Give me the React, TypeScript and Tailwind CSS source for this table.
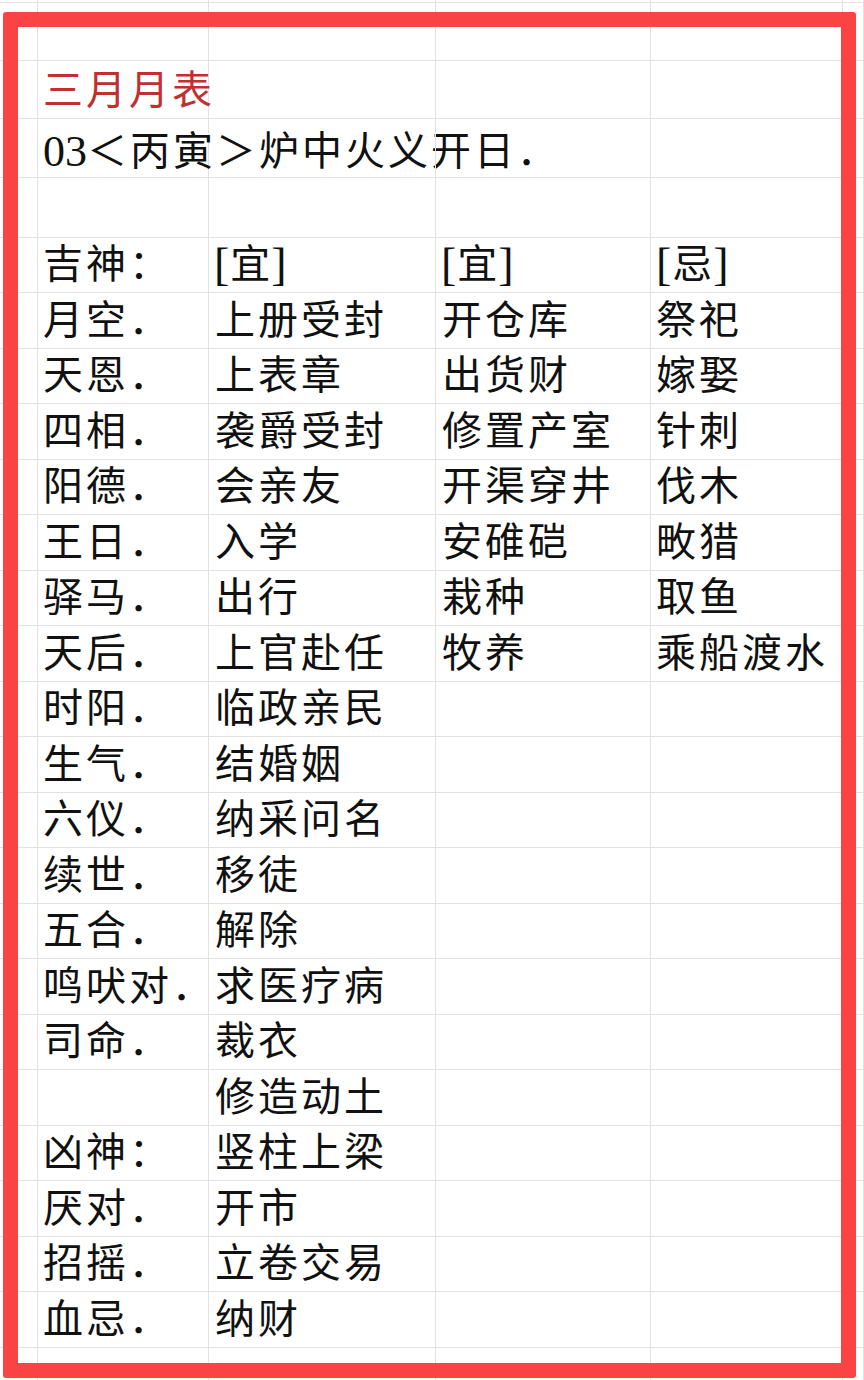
import type { ReactNode } from 'react'

// 月表数据：吉神 / 宜 / 宜 / 忌
const rows: string[][] = [
  ['月空．', '上册受封', '开仓库', '祭祀'],
  ['天恩．', '上表章', '出货财', '嫁娶'],
  ['四相．', '袭爵受封', '修置产室', '针刺'],
  ['阳德．', '会亲友', '开渠穿井', '伐木'],
  ['王日．', '入学', '安碓硙', '畋猎'],
  ['驿马．', '出行', '栽种', '取鱼'],
  ['天后．', '上官赴任', '牧养', '乘船渡水'],
  ['时阳．', '临政亲民', '', ''],
  ['生气．', '结婚姻', '', ''],
  ['六仪．', '纳采问名', '', ''],
  ['续世．', '移徒', '', ''],
  ['五合．', '解除', '', ''],
  ['鸣吠对．', '求医疗病', '', ''],
  ['司命．', '裁衣', '', ''],
  ['', '修造动土', '', ''],
  ['凶神：', '竖柱上梁', '', ''],
  ['厌对．', '开市', '', ''],
  ['招摇．', '立卷交易', '', ''],
  ['血忌．', '纳财', '', ''],
]

const font = "font-['Liberation_Serif','Noto_Sans_CJK_SC',serif]"

function Cell({ children, className = '' }: { children?: ReactNode; className?: string }) {
  return (
    <div
      className={`flex items-center border-r border-[#e2e2e2] whitespace-nowrap overflow-visible pl-[5px] text-[40px] tracking-[3px] text-[#111] leading-none ${font} ${className}`}
    >
      {children}
    </div>
  )
}

// 表头 [宜] / [忌]，方括号用衬线体并稍大
function Bracket({ word }: { word: string }) {
  return (
    <>
      <span className="text-[46px] tracking-normal">[</span>
      <span className="mx-[1px] tracking-normal">{word}</span>
      <span className="text-[46px] tracking-normal">]</span>
    </>
  )
}

/**
 * 表格行 - 六列：空列 / 吉神 / 宜 / 宜 / 忌 / 空列
 */
function Row({ height, cells = [], children }: { height: string; cells?: string[]; children?: ReactNode }) {
  return (
    <div className={`grid grid-cols-[38px_171px_227px_215px_192px_1fr] border-b border-[#e2e2e2] ${height}`}>
      <Cell />
      {children ?? (
        <>
          <Cell>{cells[0]}</Cell>
          <Cell className="pl-[6px]">{cells[1]}</Cell>
          <Cell className="pl-[6px]">{cells[2]}</Cell>
          <Cell className="pl-[5px]">{cells[3]}</Cell>
        </>
      )}
      <Cell />
    </div>
  )
}

export default function App() {
  return (
    <div className="relative w-[864px] h-[1380px] overflow-hidden bg-white">
      <Row height="h-[3px]" />
      <Row height="h-[58px]" />
      <Row height="h-[58px]">
        <Cell className="text-[#c0302f] pt-[2px]">三月月表</Cell>
        <Cell />
        <Cell />
        <Cell />
      </Row>
      <Row height="h-[59px]">
        <Cell className="pl-[1px] pt-[8px]">
          <span className="text-[44px] tracking-normal">03</span>＜丙寅＞炉中火义开日．
        </Cell>
        <Cell />
        <Cell />
        <Cell />
      </Row>
      <Row height="h-[60px]" />
      <Row height="h-[55px]">
        <Cell>吉神：</Cell>
        <Cell className="pl-[1px]">
          <Bracket word="宜" />
        </Cell>
        <Cell className="pl-[1px]">
          <Bracket word="宜" />
        </Cell>
        <Cell className="pl-[1px]">
          <Bracket word="忌" />
        </Cell>
      </Row>
      {rows.map((r, i) => (
        <Row key={i} height={i % 2 === 0 ? 'h-14' : 'h-[55px]'} cells={r} />
      ))}
      <Row height="h-[40px]" />

      {/* 红色外框，覆盖在表格之上 */}
      <div className="pointer-events-none absolute left-[3px] top-[12px] w-[853px] h-[1366px] rounded-[3px] border-[15px] border-[#fa4444]" />
    </div>
  )
}
